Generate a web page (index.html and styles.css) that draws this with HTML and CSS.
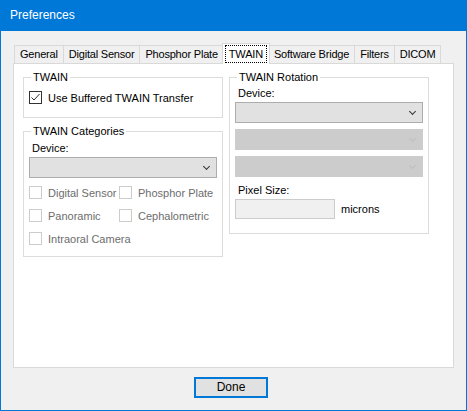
FILE: index.html
```html
<!doctype html>
<html>
<head>
<meta charset="utf-8">
<title>Preferences</title>
<link rel="stylesheet" href="styles.css">
</head>
<body>
<div class="window">
	<div class="titlebar">Preferences</div>
	<div class="content">
		<div class="tabs">
			<div class="tab">General</div>
			<div class="tab">Digital Sensor</div>
			<div class="tab">Phosphor Plate</div>
			<div class="tab active"><span class="focus">TWAIN</span></div>
			<div class="tab">Software Bridge</div>
			<div class="tab">Filters</div>
			<div class="tab">DICOM</div>
		</div>
		<div class="panel">
			<div class="col">
				<div class="group g-twain">
					<div class="group-title">TWAIN</div>
					<div class="check-row">
						<span class="box checked">
							<svg width="11" height="11" viewBox="0 0 11 11"><path d="M1.5 5.5 L4 8 L9.5 2" fill="none" stroke="#333" stroke-width="1"/></svg>
						</span>
						<span>Use Buffered TWAIN Transfer</span>
					</div>
				</div>
				<div class="group g-cats">
					<div class="group-title">TWAIN Categories</div>
					<div class="label">Device:</div>
					<div class="combo"><span class="chev"></span></div>
					<div class="check-grid">
						<div class="check-row off"><span class="box"></span><span>Digital Sensor</span></div>
						<div class="check-row off"><span class="box"></span><span>Phosphor Plate</span></div>
						<div class="check-row off"><span class="box"></span><span>Panoramic</span></div>
						<div class="check-row off"><span class="box"></span><span>Cephalometric</span></div>
						<div class="check-row off"><span class="box"></span><span>Intraoral Camera</span></div>
					</div>
				</div>
			</div>
			<div class="col">
				<div class="group g-rot">
					<div class="group-title">TWAIN Rotation</div>
					<div class="label">Device:</div>
					<div class="combo"><span class="chev"></span></div>
					<div class="combo disabled"><span class="chev"></span></div>
					<div class="combo disabled"><span class="chev"></span></div>
					<div class="label pix">Pixel Size:</div>
					<div class="pix-row">
						<div class="textbox"></div>
						<span>microns</span>
					</div>
				</div>
			</div>
		</div>
		<div class="footer">
			<div class="btn">Done</div>
		</div>
	</div>
</div>
</body>
</html>
```
FILE: styles.css
```css
*{margin: 0; padding: 0; box-sizing: border-box;}
body { font-family: "Liberation Sans", Arial, sans-serif; font-size: 11px; color: #000; background: #fff;}
.window {
	width: 467px;
	height: 411px;
	background: #f0f0f0;
	border: 1px solid #0078d7;
	border-top: 0;
}
.titlebar {
	height: 31px;
	line-height: 31px;
	font-size: 12px;
	background: #0078d7;
	color: #fff;
	margin: 0 -1px;
	padding-left: 10px;
}
.content { padding: 12px 0 0 12px;}
/*-----------------------------------------------*/
.tabs {
	display: flex;
	align-items: flex-end;
	height: 20px;
	padding-left: 2px;
}
.tab {
	flex: none;
	white-space: nowrap;
	height: 18px;
	line-height: 17px;
	padding: 0 5px;
	letter-spacing: -0.2px;
	border: 1px solid #d9d9d9;
	border-bottom: 0;
	margin-left: -1px;
	background: #f0f0f0;
}
.tab.active {
	height: 21px;
	margin: 0 -1px -1px -2px;
	padding: 1px 2px 0;
	background: #fff;
	position: relative;
	line-height: 18px;
}
.focus {
	display: block;
	border: 1px dotted #000;
	line-height: 16px;
	padding: 0 3px;
	height: 18px;
}
.panel {
	width: 441px;
	height: 305px;
	background: #fff;
	border: 1px solid #d9d9d9;
	padding: 13px 0 0 9px;
	display: flex;
	gap: 6px;
}
.col { width: 200px;}
.group {
	border: 1px solid #dcdcdc;
	padding: 0 5px;
}
.group-title {
	width: fit-content;
	background: #fff;
	line-height: 14px;
	margin: -8px 0 0 2px;
	padding: 0 2px;
}
.g-twain { height: 41px;}
.g-cats { height: 126px; margin-top: 13px;}
.g-rot { height: 157px;}
.label { line-height: 14px; margin-top: 2px; padding-left: 3px;}
.g-cats .label { margin-top: 3px;}
.label.pix { margin-top: 6px;}
/*-----------------------------------------------*/
.check-row {
	display: flex;
	align-items: center;
	height: 13px;
	gap: 6px;
	white-space: nowrap;
}
.g-twain .check-row { margin-top: 7px;}
.box {
	width: 13px;
	height: 13px;
	flex: none;
	border: 1px solid #333;
	background: #fff;
}
.box svg { display: block;}
.off { color: #6d6d6d;}
.off .box { border-color: #cccccc;}
.check-grid {
	display: grid;
	grid-template-columns: 90px 90px;
	row-gap: 10px;
	margin-top: 8px;
}
/*-----------------------------------------------*/
.combo {
	height: 21px;
	background: #e1e1e1;
	border: 1px solid #adadad;
	margin-top: 2px;
	display: flex;
	justify-content: flex-end;
	align-items: center;
	padding-right: 7px;
}
.combo + .combo { margin-top: 6px;}
.chev {
	width: 5px;
	height: 5px;
	border-right: 1px solid #333;
	border-bottom: 1px solid #333;
	transform: rotate(45deg);
	margin-top: -3px;
}
.combo.disabled { background: #cccccc; border-color: #cccccc;}
.combo.disabled .chev { border-color: #bfbfbf;}
.pix-row {
	display: flex;
	align-items: center;
	gap: 6px;
	margin-top: 2px;
}
.textbox {
	width: 100px;
	height: 20px;
	background: #f0f0f0;
	border: 1px solid #cccccc;
}
/*-----------------------------------------------*/
.footer { padding: 9px 0 0 181px;}
.btn {
	width: 74px;
	height: 21px;
	line-height: 17px;
	font-size: 12px;
	text-align: center;
	background: #e1e1e1;
	border: 2px solid #0078d7;
}
```
